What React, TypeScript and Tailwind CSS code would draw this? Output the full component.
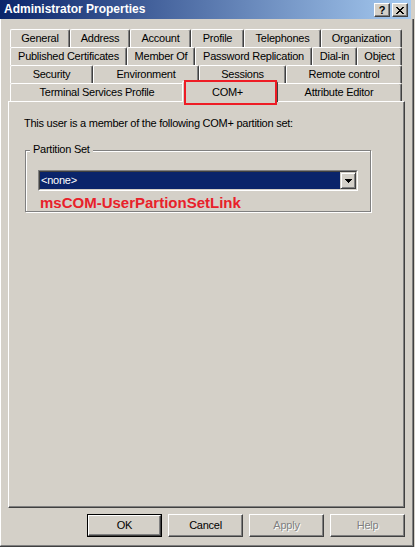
import React from "react";

type Tab = { label: string; w: string };

const rows: Tab[][] = [
  [
    { label: "General", w: "w-[60px]" },
    { label: "Address", w: "w-[60px]" },
    { label: "Account", w: "w-[61px]" },
    { label: "Profile", w: "w-[53px]" },
    { label: "Telephones", w: "w-[77px]" },
    { label: "Organization", w: "w-[81px]" },
  ],
  [
    { label: "Published Certificates", w: "w-[117px]" },
    { label: "Member Of", w: "w-[68px]" },
    { label: "Password Replication", w: "w-[117px]" },
    { label: "Dial-in", w: "w-[45px]" },
    { label: "Object", w: "w-[45px]" },
  ],
  [
    { label: "Security", w: "w-[83px]" },
    { label: "Environment", w: "w-[106px]" },
    { label: "Sessions", w: "w-[87px]" },
    { label: "Remote control", w: "w-[116px]" },
  ],
];

function TabItem({ label, w }: Tab) {
  return (
    <div
      className={`${w} h-[18px] shrink-0 flex justify-center pt-[2px] border-l border-t border-r border-l-white border-t-white border-r-[#404040] shadow-[inset_-1px_0_0_#808080] rounded-t-[2px] whitespace-nowrap`}
    >
      {label}
    </div>
  );
}

function DlgButton({ label, primary, disabled }: { label: string; primary?: boolean; disabled?: boolean }) {
  if (primary) {
    return (
      <div className="w-[75px] h-[23px] border border-black">
        <div className="w-full h-full flex items-center justify-center border border-t-white border-l-white border-r-[#404040] border-b-[#404040] shadow-[inset_-1px_-1px_0_#808080]">
          {label}
        </div>
      </div>
    );
  }
  return (
    <div className="w-[75px] h-[23px] flex items-center justify-center border border-t-white border-l-white border-r-[#404040] border-b-[#404040] shadow-[inset_-1px_-1px_0_#808080]">
      <span className={disabled ? "text-[#808080] [text-shadow:1px_1px_0_#fff]" : ""}>{label}</span>
    </div>
  );
}

function CaptionButton({ children }: { children: React.ReactNode }) {
  return (
    <div className="w-[16px] h-[14px] flex items-center justify-center bg-[#d4d0c8] border border-t-white border-l-white border-r-[#404040] border-b-[#404040] shadow-[inset_-1px_-1px_0_#808080]">
      {children}
    </div>
  );
}

export default function App() {
  return (
    <div className="relative w-[415px] h-[547px] overflow-hidden bg-[#d4d0c8] font-['Liberation_Sans',Arial,sans-serif] text-[11px] leading-[13px] tracking-[-0.25px] text-black">
      {/* Title bar */}
      <div className="flex h-[19px] w-[411px] bg-[linear-gradient(to_right,#0a246a,#a6caf0)]">
        <span className="pl-[4px] pt-[2px] font-bold text-[12px] leading-[14px] tracking-normal text-white whitespace-nowrap">
          Administrator Properties
        </span>
        <div className="ml-auto flex gap-[2px] pt-[3px] pr-[3px]">
          <CaptionButton>
            <span className="font-bold text-[11px] leading-[11px] tracking-normal text-black">?</span>
          </CaptionButton>
          <CaptionButton>
            <svg width="8" height="7" viewBox="0 0 8 7" shapeRendering="crispEdges">
              <path
                fill="#000"
                d="M0 0h2v1H0zM6 0h2v1H6zM1 1h2v1H1zM5 1h2v1H5zM2 2h4v1H2zM3 3h2v1H3zM2 4h4v1H2zM1 5h2v1H1zM5 5h2v1H5zM0 6h2v1H0zM6 6h2v1H6z"
              />
            </svg>
          </CaptionButton>
        </div>
      </div>

      {/* Window frame */}
      <div className="w-[414px] h-[528px] border-r border-b border-[#404040]">
        <div className="h-full border-l border-r border-b border-l-white border-r-[#808080] border-b-[#808080] pt-[10px]">
          {/* Tabs */}
          <div className="ml-[9px] w-[392px] flex flex-col">
            {rows.map((row, i) => (
              <div key={i} className="flex h-[18px]">
                {row.map((t) => (
                  <TabItem key={t.label} {...t} />
                ))}
              </div>
            ))}
            <div className="flex h-[18px]">
              <TabItem label="Terminal Services Profile" w="w-[174px]" />
              <div className="relative z-10 -mx-[2px] -mt-[2px] w-[96px] h-[21px] shrink-0 flex justify-center pt-[4px] pr-[5px] bg-[#d4d0c8] border-l border-t border-r border-l-white border-t-white border-r-[#404040] shadow-[inset_-1px_0_0_#808080] rounded-t-[2px]">
                COM+
              </div>
              <TabItem label="Attribute Editor" w="w-[126px]" />
            </div>
          </div>

          {/* Panel */}
          <div className="ml-[7px] w-[397px] h-[407px] border border-t-white border-l-white border-r-[#404040] border-b-[#404040] shadow-[inset_-1px_-1px_0_#808080] pl-[15px] pt-[15px]">
            <p>This user is a member of the following COM+ partition set:</p>
            <div className="relative mt-[20px] ml-[1px] w-[346px] h-[62px] border border-[#808080] shadow-[inset_1px_1px_0_#fff,1px_1px_0_#fff]">
              <span className="absolute left-[4px] -top-[8px] px-[3px] bg-[#d4d0c8]">Partition Set</span>
              <div className="ml-[12px] mt-[19px] w-[320px] h-[21px] border border-t-[#808080] border-l-[#808080] border-r-white border-b-white">
                <div className="h-full flex border border-t-[#404040] border-l-[#404040] border-r-[#d4d0c8] border-b-[#d4d0c8]">
                  <div className="flex-1 bg-[#0a246a] text-white pl-[1px] flex items-center">&lt;none&gt;</div>
                  <div className="w-[16px] h-full flex items-center justify-center bg-[#d4d0c8] border border-t-[#d4d0c8] border-l-[#d4d0c8] border-r-[#404040] border-b-[#404040] shadow-[inset_1px_1px_0_#fff,inset_-1px_-1px_0_#808080]">
                    <svg width="7" height="4" viewBox="0 0 7 4" shapeRendering="crispEdges">
                      <path fill="#000" d="M0 0h7v1H0zM1 1h5v1H1zM2 2h3v1H2zM3 3h1v1H3z" />
                    </svg>
                  </div>
                </div>
              </div>
              <div className="ml-[14px] mt-[3px] text-[15px] leading-[17px] font-bold tracking-normal text-[#e8212a] whitespace-nowrap">
                msCOM-UserPartionSetLink
              </div>
            </div>
          </div>

          {/* Buttons */}
          <div className="ml-[7px] mt-[6px] w-[397px] flex justify-end gap-[6px]">
            <DlgButton label="OK" primary />
            <DlgButton label="Cancel" />
            <DlgButton label="Apply" disabled />
            <DlgButton label="Help" disabled />
          </div>
        </div>
      </div>

      {/* Red annotation box */}
      <div className="absolute z-20 left-[184px] top-[80px] w-[93px] h-[25px] border-2 border-[#ee1c25]" />
    </div>
  );
}
